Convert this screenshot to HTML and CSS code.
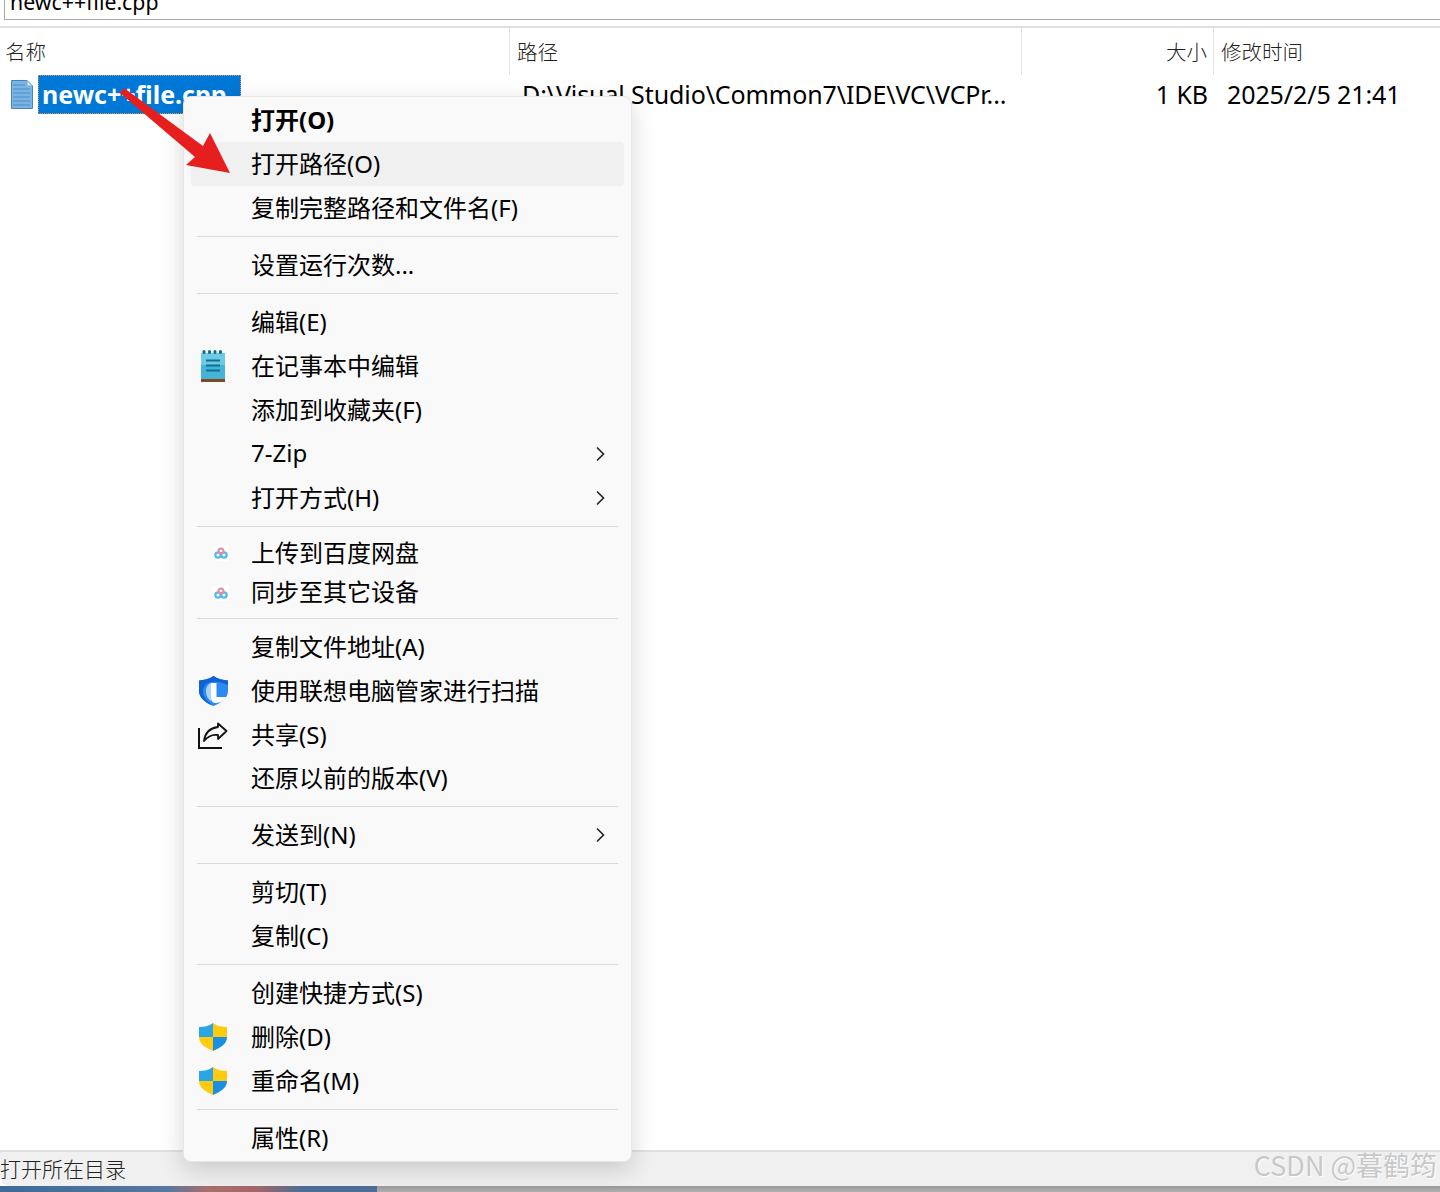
FILE: index.html
```html
<!DOCTYPE html>
<html lang="zh-CN">
<head>
<meta charset="utf-8">
<title>Everything</title>
<link rel="stylesheet" href="styles.css">
</head>
<body>
<div class="window">
  <div class="search"><div class="search-box">newc++file.cpp</div></div>
  <div class="cols head">
    <div class="hcell">名称</div>
    <div class="hcell">路径</div>
    <div class="hcell right">大小</div>
    <div class="hcell">修改时间</div>
  </div>
  <div class="cols row">
    <div class="cell-name">
      <svg class="file-icon" width="22" height="29" viewBox="0 0 22 29"><path d="M.5.500H16L21.500 6V28.500H.5Z" fill="#7ab4e6" stroke="#4a82b0"/><path d="M16 .5V6H21.500Z" fill="#d5e8f7" stroke="#7fa9cc"/><path d="M2 5H14M2 9H19M2 13H19M2 17H19M2 21H19M2 25H19" stroke="#4d8cc0"/></svg>
      <span class="selected">newc++file.cpp</span>
    </div>
    <div class="cell-path">D:\Visual Studio\Common7\IDE\VC\VCPr...</div>
    <div class="cell-size">1 KB</div>
    <div class="cell-date">2025/2/5 21:41</div>
  </div>
  <div class="spacer"></div>
  <div class="status"><span>打开所在目录</span><span class="watermark">CSDN @暮鹤筠</span></div>
  <div class="strip"><div class="wallpaper"></div></div>

  <div class="menu">
    <div class="item bold"><span class="ic"></span>打开(O)</div>
    <div class="item hover"><span class="ic"></span>打开路径(O)</div>
    <div class="item"><span class="ic"></span>复制完整路径和文件名(F)</div>
    <div class="sep"></div>
    <div class="item"><span class="ic"></span>设置运行次数...</div>
    <div class="sep"></div>
    <div class="item"><span class="ic"></span>编辑(E)</div>
    <div class="item"><span class="ic"><svg width="26" height="33" viewBox="0 0 26 33"><rect x="1" y="3" width="24" height="28" fill="#45b4d6"/><rect x="1" y="3" width="24" height="12" fill="#6dcbe5"/><rect x="1" y="29" width="24" height="3" fill="#7a4a22"/><path d="M4 2.500V1.500M9.500 2.500V1.500M15 2.500V1.500M20.500 2.500V1.500" stroke="#0f6b8c" stroke-width="3" stroke-linecap="round"/><path d="M6 10.500H20M6 15.500H20M6 20.500H20" stroke="#0f6f95" stroke-width="2"/></svg></span>在记事本中编辑</div>
    <div class="item"><span class="ic"></span>添加到收藏夹(F)</div>
    <div class="item"><span class="ic"></span>7-Zip<svg class="chev" width="10" height="16" viewBox="0 0 10 16"><path d="M2 1.500L8.500 8L2 14.500" fill="none" stroke="#222" stroke-width="1.600"/></svg></div>
    <div class="item"><span class="ic"></span>打开方式(H)<svg class="chev" width="10" height="16" viewBox="0 0 10 16"><path d="M2 1.500L8.500 8L2 14.500" fill="none" stroke="#222" stroke-width="1.600"/></svg></div>
    <div class="sep"></div>
    <div class="item short"><span class="ic ic-small"><svg width="16" height="16" viewBox="0 0 16 16"><rect width="16" height="16" rx="2" fill="#fff"/><circle cx="5" cy="10" r="2.700" fill="none" stroke="#4fb8f0" stroke-width="2.200"/><circle cx="11" cy="10" r="2.700" fill="none" stroke="#4fb8f0" stroke-width="2.200"/><circle cx="8" cy="6" r="2.500" fill="none" stroke="#e58ca0" stroke-width="2"/></svg></span>上传到百度网盘</div>
    <div class="item short2"><span class="ic ic-small"><svg width="16" height="16" viewBox="0 0 16 16"><rect width="16" height="16" rx="2" fill="#fff"/><circle cx="5" cy="10" r="2.700" fill="none" stroke="#4fb8f0" stroke-width="2.200"/><circle cx="11" cy="10" r="2.700" fill="none" stroke="#4fb8f0" stroke-width="2.200"/><circle cx="8" cy="6" r="2.500" fill="none" stroke="#e58ca0" stroke-width="2"/></svg></span>同步至其它设备</div>
    <div class="sep"></div>
    <div class="item"><span class="ic"></span>复制文件地址(A)</div>
    <div class="item"><span class="ic"><svg width="29" height="30" viewBox="0 0 29 30"><path d="M14.500 0C19 3 24 4 29 4.500V15C29 22 22 27 14.500 30C7 27 0 22 0 15V4.500C5 4 10 3 14.500 0Z" fill="#2c8bf2"/><path d="M14.500 0C19 3 24 4 29 4.500V9C23 7 17 4 9 7C5 9 4 13 4 16C4 21 8 25 14.500 30C7 27 0 22 0 15V4.500C5 4 10 3 14.500 0Z" fill="#0f62d6"/><path d="M12 7H17.500V21H27C26 24 21 27 17 27C14 27 12 25 12 22Z" fill="#fff"/><path d="M7 15C7 11 9 8 12 7V25C9 23 7 20 7 15Z" fill="#a9d3fb"/></svg></span>使用联想电脑管家进行扫描</div>
    <div class="item"><span class="ic"><svg width="30" height="27" viewBox="0 0 30 27"><path d="M1 6V26H24" fill="none" stroke="#111" stroke-width="2"/><path d="M20 1.500L28.500 9L20 17V13C14 12 10 14 6 19C7 11 12 6 20 5Z" fill="none" stroke="#111" stroke-width="1.800" stroke-linejoin="round"/></svg></span>共享(S)</div>
    <div class="item tight"><span class="ic"></span>还原以前的版本(V)</div>
    <div class="sep"></div>
    <div class="item"><span class="ic"></span>发送到(N)<svg class="chev" width="10" height="16" viewBox="0 0 10 16"><path d="M2 1.500L8.500 8L2 14.500" fill="none" stroke="#222" stroke-width="1.600"/></svg></div>
    <div class="sep"></div>
    <div class="item"><span class="ic"></span>剪切(T)</div>
    <div class="item"><span class="ic"></span>复制(C)</div>
    <div class="sep"></div>
    <div class="item"><span class="ic"></span>创建快捷方式(S)</div>
    <div class="item"><span class="ic"><svg width="28" height="28" viewBox="0 0 28 28"><path d="M14 0C10 3 5 4 0 4V14H14Z" fill="#2aa5e6"/><path d="M14 0C18 3 23 4 28 4V14H14Z" fill="#ffcb0f"/><path d="M0 14C0 21 7 25 14 28V14Z" fill="#ffcb0f"/><path d="M28 14C28 21 21 25 14 28V14Z" fill="#1a8ee0"/></svg></span>删除(D)</div>
    <div class="item"><span class="ic"><svg width="28" height="28" viewBox="0 0 28 28"><path d="M14 0C10 3 5 4 0 4V14H14Z" fill="#2aa5e6"/><path d="M14 0C18 3 23 4 28 4V14H14Z" fill="#ffcb0f"/><path d="M0 14C0 21 7 25 14 28V14Z" fill="#ffcb0f"/><path d="M28 14C28 21 21 25 14 28V14Z" fill="#1a8ee0"/></svg></span>重命名(M)</div>
    <div class="sep"></div>
    <div class="item"><span class="ic"></span>属性(R)</div>
  </div>

  <svg class="arrow" width="130" height="100" viewBox="0 0 130 100"><path d="M4 2L0 7L75 71L66 79L110 87L90 47L83 60Z" fill="#e61e1e"/></svg>
</div>
</body>
</html>
```
FILE: styles.css
```css
* { box-sizing: border-box; }
html, body { margin: 0; padding: 0; background: #fff; }
body { font-family: "Noto Sans", "Noto Sans CJK SC", sans-serif; color: #000; }
.window { position: relative; width: 1440px; height: 1192px; overflow: hidden; display: flex; flex-direction: column; background: #fff; }

.search { height: 28px; padding: 0 0 0 4px; border-bottom: 2px solid #e0e0e0; flex: none; }
.search-box { height: 20px; border: 1px solid #a8a8a8; border-top: 0; border-right: 0; padding-left: 5px; font-size: 21.300px; line-height: 4px; overflow: hidden; }

.cols { display: grid; grid-template-columns: 510px 512px 192px 1fr; flex: none; }
.head { height: 47px; }
.hcell { font-family: "Noto Sans CJK SC", sans-serif; font-weight: 300; font-size: 20.500px; line-height: 46px; padding-left: 7px; color: #222; border-right: 1px solid #e5e5e5; }
.hcell:first-child { padding-left: 5px; }
.hcell:last-child { border-right: 0; }
.hcell.right { text-align: right; padding-right: 6px; }

.row { height: 39px; font-size: 25px; line-height: 39px; letter-spacing: -.1px; align-items: center; }
.cell-name { display: flex; align-items: center; padding-left: 11px; gap: 5px; height: 39px; }
.file-icon { flex: none; }
.selected { width: 203px; height: 39px; background: #0078d7; color: #fff; font-weight: 700; padding-left: 3px; border: 1px dotted #d9964a; line-height: 36px; letter-spacing: 0; white-space: nowrap; overflow: hidden; }
.cell-path { padding-left: 12px; white-space: nowrap; }
.cell-size { text-align: right; padding-right: 6px; }
.cell-date { padding-left: 13px; white-space: nowrap; }

.spacer { flex: 1; }
.status { flex: none; height: 36px; background: #f0f0f0; border-top: 2px solid #e0e0e0; display: flex; justify-content: space-between; font-family: "Noto Sans CJK SC", sans-serif; font-weight: 300; font-size: 21px; line-height: 32px; padding: 0 3px 0 0; color: #222; border-bottom-left-radius: 10px; }
.watermark { color: #c8c8c8; font-size: 27px; font-weight: 400; line-height: 26px; text-shadow: 1px 1px 1px #fff; }
.strip { flex: none; height: 6px; background: linear-gradient(#9a9a9a, #b0b0b0); }
.wallpaper { width: 377px; height: 100%; background: linear-gradient(90deg, #3f6b97 0%, #5577a0 44%, #a8716c 55%, #a4686a 68%, #4e6e96 80%, #4e6e96 100%); }

.menu { position: absolute; left: 183px; top: 96px; width: 449px; height: 1066px; padding: 1px 7px 0 7px; background: #f9f9f9; border: 1px solid #e6e6e6; border-radius: 8px; box-shadow: 0 8px 24px rgba(0, 0, 0, .16); font-size: 24px; }
.item { display: flex; align-items: center; height: 44px; padding-bottom: 4px; border-radius: 4px; white-space: nowrap; }
.item.short { height: 40px; }
.item.short2 { height: 39px; }
.item.tight { height: 43px; }
.item.bold { font-weight: 700; }
.item.hover { background: #f0f0f0; }
.ic { flex: none; width: 44px; margin-right: 16px; margin-bottom: -4px; display: flex; align-items: center; justify-content: center; }
.ic-small { padding-left: 16px; }
.chev { margin-left: auto; margin-right: 19px; margin-bottom: -4px; }
.sep { height: 1px; margin: 6px 6px; background: #d9d9d9; }

.arrow { position: absolute; left: 120px; top: 86px; }
```
